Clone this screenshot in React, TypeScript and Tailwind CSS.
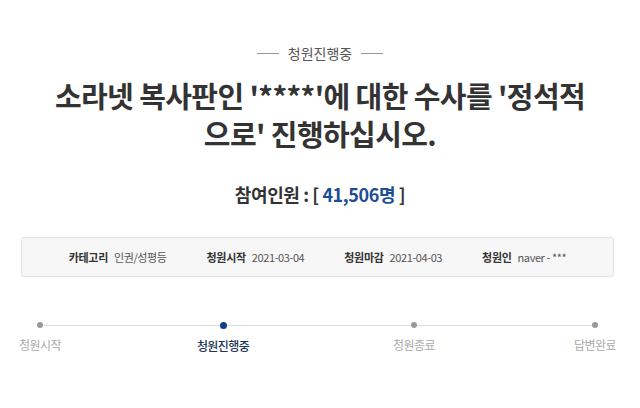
import React from 'react';

const info = [
  { label: '카테고리', value: '인권/성평등' },
  { label: '청원시작', value: '2021-03-04' },
  { label: '청원마감', value: '2021-04-03' },
  { label: '청원인', value: 'naver - ***' },
];

const steps = [
  { label: '청원시작', active: false },
  { label: '청원진행중', active: true },
  { label: '청원종료', active: false },
  { label: '답변완료', active: false },
];

export default function App() {
  return (
    <div className="w-[640px] h-[408px] bg-white overflow-hidden pt-[43px] font-['Noto_Sans_CJK_KR',sans-serif]">
      {/* status label */}
      <div className="flex items-center justify-center gap-[9px]">
        <span className="block w-[22px] h-px bg-[#999]" />
        <span className="text-[14px] leading-[20px] text-[#555]">청원진행중</span>
        <span className="block w-[22px] h-px bg-[#999]" />
      </div>

      {/* title */}
      <h1 className="mt-[13px] px-[40px] text-center text-[29px] leading-[38px] font-bold text-[#333] tracking-[-0.6px]">
        소라넷 복사판인 '****'에 대한 수사를 '정석적
        <br />
        으로' 진행하십시오.
      </h1>

      {/* count */}
      <div className="mt-[29px] text-center text-[18px] leading-[26px] font-bold text-[#333] tracking-[-0.4px]">
        참여인원 : [ <span className="text-[#1c4d95]">41,506명</span> ]
      </div>

      {/* info box */}
      <div className="mt-[30px] mx-[21px] w-[593px] h-[40px] rounded-[3px] border border-[#e2e2e2] bg-[#f7f7f7] flex items-center justify-center gap-[40px] text-[11px]">
        {info.map((it) => (
          <div key={it.label} className="flex items-center gap-[6px]">
            <span className="font-bold text-[#333] tracking-[-0.3px]">{it.label}</span>
            <span className="text-[#555] tracking-[-0.4px]">{it.value}</span>
          </div>
        ))}
      </div>

      {/* progress */}
      <div className="relative mt-[45px] w-[635px] grid grid-cols-[183px_191px_181px_80px]">
        <div className="absolute left-[40px] right-[40px] top-[3px] h-px bg-[#dcdcdc]" />
        {steps.map((s) => (
          <div key={s.label} className="relative w-[80px] flex flex-col items-center">
            <span
              className={
                s.active
                  ? 'block w-[7px] h-[7px] rounded-full bg-[#0e3f86]'
                  : 'block w-[6px] h-[6px] rounded-full bg-[#999]'
              }
            />
            <span
              className={
                s.active
                  ? 'mt-[8px] text-[12px] leading-[18px] font-medium text-[#1d3557] tracking-[-0.6px]'
                  : 'mt-[8px] text-[12px] leading-[18px] text-[#aaa] tracking-[-0.6px]'
              }
            >
              {s.label}
            </span>
          </div>
        ))}
      </div>
    </div>
  );
}
